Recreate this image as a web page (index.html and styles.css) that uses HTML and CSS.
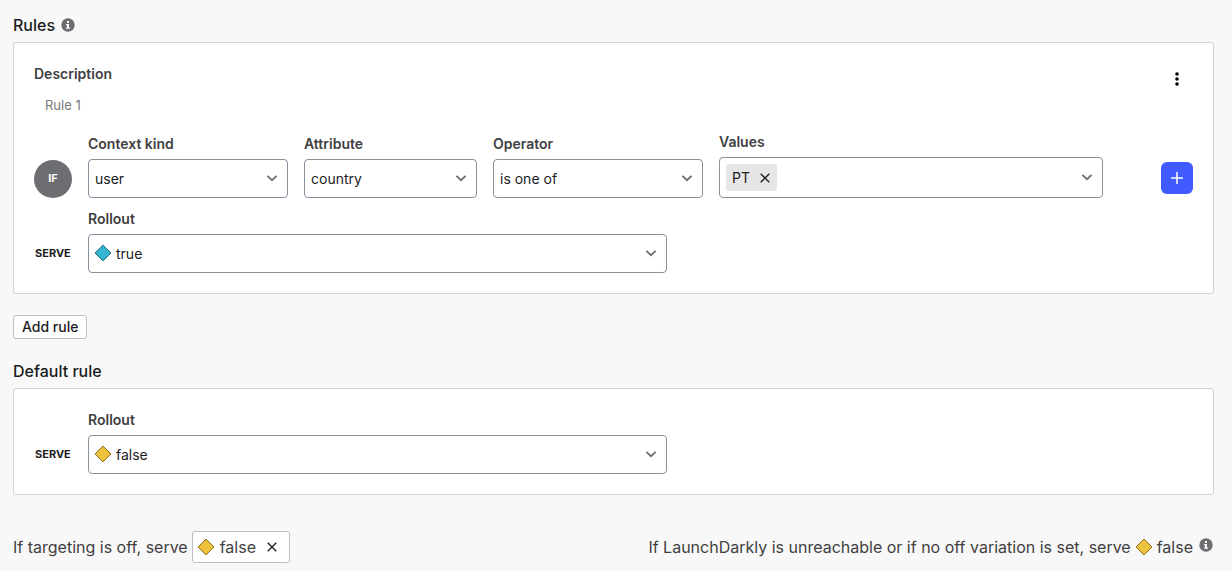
FILE: index.html
```html
<!DOCTYPE html>
<html lang="en">
<head>
<meta charset="utf-8">
<title>Targeting rules</title>
<link rel="stylesheet" href="styles.css">
</head>
<body>
<svg class="defs" width="0" height="0" aria-hidden="true">
  <symbol id="chevron" viewBox="0 0 12 12"><path d="M1.400 3.800 6 8.200l4.600-4.400" fill="none" stroke="currentColor" stroke-width="1.800"/></symbol>
  <symbol id="close" viewBox="0 0 12 12"><path d="m1.700 1.700 8.600 8.600m0-8.600-8.600 8.600" fill="none" stroke="currentColor" stroke-width="1.300"/></symbol>
  <symbol id="diamond" viewBox="0 0 18 18"><path d="M9 1.100 16.900 9 9 16.900 1.100 9z" stroke-width="1"/></symbol>
  <symbol id="info" viewBox="0 0 14 14"><circle cx="7" cy="7" r="6.700" fill="currentColor"/><path d="M6 3h2v1.900H6zM5 6h3v3.400h1v1.300H5V9.400h1V7.300H5z" fill="#f8f8f8"/></symbol>
</svg>
<main class="page">
  <header class="heading">
    <h2 class="title">Rules</h2>
    <svg class="info"><use href="#info"/></svg>
  </header>
  <section class="card">
    <div class="card-top">
      <div class="description">
        <label class="label" for="description">Description</label>
        <input class="description-input" id="description" type="text" value="Rule 1">
      </div>
      <button class="menu" type="button" aria-label="Rule options">
        <svg width="4" height="16" viewBox="0 0 4 16"><circle cx="2" cy="3" r="1.800"/><circle cx="2" cy="8" r="1.800"/><circle cx="2" cy="13" r="1.800"/></svg>
      </button>
    </div>
    <div class="clause">
      <div class="lead"><span class="badge">IF</span></div>
      <div class="fields">
        <div class="field">
          <label class="label" for="kind">Context kind</label>
          <div class="control"><select class="select" id="kind"><option>user</option></select><svg class="chevron"><use href="#chevron"/></svg></div>
        </div>
        <div class="field">
          <label class="label" for="attribute">Attribute</label>
          <div class="control"><select class="select" id="attribute"><option>country</option></select><svg class="chevron"><use href="#chevron"/></svg></div>
        </div>
        <div class="field">
          <label class="label" for="operator">Operator</label>
          <div class="control"><select class="select" id="operator"><option>is one of</option></select><svg class="chevron"><use href="#chevron"/></svg></div>
        </div>
        <div class="field">
          <label class="label" for="values">Values</label>
          <div class="control values">
            <span class="tag">PT<button class="remove" type="button" aria-label="Remove PT"><svg class="close"><use href="#close"/></svg></button></span>
            <input class="values-input" id="values" type="text">
            <svg class="chevron"><use href="#chevron"/></svg>
          </div>
        </div>
      </div>
      <div class="action">
        <button class="add" type="button" aria-label="Add clause"><svg width="12" height="12" viewBox="0 0 12 12"><path d="M6 0v12M0 6h12" stroke="currentColor" stroke-width="1.500"/></svg></button>
      </div>
    </div>
    <div class="clause">
      <div class="lead serve">SERVE</div>
      <div class="field rollout">
        <label class="label" for="rollout">Rollout</label>
        <div class="control"><svg class="diamond blue over"><use href="#diamond"/></svg><select class="select variation" id="rollout"><option>true</option></select><svg class="chevron"><use href="#chevron"/></svg></div>
      </div>
    </div>
  </section>
  <button class="add-rule" type="button">Add rule</button>
  <header class="heading">
    <h2 class="title">Default rule</h2>
  </header>
  <section class="card">
    <div class="clause">
      <div class="lead serve">SERVE</div>
      <div class="field rollout">
        <label class="label" for="default-rollout">Rollout</label>
        <div class="control"><svg class="diamond yellow over"><use href="#diamond"/></svg><select class="select variation" id="default-rollout"><option>false</option></select><svg class="chevron"><use href="#chevron"/></svg></div>
      </div>
    </div>
  </section>
  <footer class="footer">
    <div class="fallback">
      <span>If targeting is off, serve</span>
      <span class="chip"><svg class="diamond yellow"><use href="#diamond"/></svg>false<button class="remove" type="button" aria-label="Clear off variation"><svg class="close"><use href="#close"/></svg></button></span>
    </div>
    <div class="fallback">
      <span>If LaunchDarkly is unreachable or if no off variation is set, serve</span>
      <span class="variation-name"><svg class="diamond yellow"><use href="#diamond"/></svg>false</span>
      <svg class="info raised"><use href="#info"/></svg>
    </div>
  </footer>
</main>
</body>
</html>
```
FILE: styles.css
```css
* {
  box-sizing: border-box;
}

body {
  margin: 0;
  background: #f8f8f8;
  color: #1c1c1e;
  font: 14px/22px Inter, "Liberation Sans", sans-serif;
}

button,
input,
select {
  margin: 0;
  padding: 0;
  border: 0;
  background: none;
  color: inherit;
  font: inherit;
}

svg {
  display: block;
  flex: none;
}

.defs {
  position: absolute;
}

.page {
  display: flex;
  flex-direction: column;
  padding: 13px 18px 8px 13px;
}

.heading {
  display: flex;
  align-items: center;
  gap: 6px;
  margin-bottom: 5px;
}

.title {
  margin: 0;
  font-size: 16px;
  line-height: 24px;
  font-weight: 500;
}

.info {
  width: 14px;
  height: 14px;
  color: #6d6e71;
}

.card {
  display: flex;
  flex-direction: column;
  gap: 10px;
  padding: 20px;
  border: 1px solid #d1d3d4;
  border-radius: 3px;
  background: #fff;
}

.card-top {
  display: flex;
  justify-content: space-between;
  align-items: flex-start;
}

.description {
  display: flex;
  flex-direction: column;
  gap: 4px;
}

.label {
  color: #414042;
  font-weight: 600;
}

.description-input {
  width: 300px;
  height: 32px;
  padding: 0 11px;
  color: #77787b;
  font-size: 13px;
}

.menu,
.add {
  display: grid;
  place-items: center;
  width: 32px;
  height: 32px;
}

.clause {
  display: flex;
  align-items: flex-end;
}

.lead {
  flex: none;
  display: flex;
  align-items: center;
  width: 54px;
  font-size: 11px;
  font-weight: 700;
}

.serve {
  height: 40px;
  padding-left: 1px;
}

.badge {
  display: grid;
  place-items: center;
  width: 38px;
  height: 38px;
  padding-bottom: 2px;
  border-radius: 50%;
  background: #6d6e71;
  color: #fff;
}

.fields {
  flex: 1;
  display: grid;
  grid-template-columns: 200fr 173fr 210fr 384fr;
  align-items: end;
  gap: 16px;
}

.field {
  display: flex;
  flex-direction: column;
  gap: 4px;
  min-width: 0;
}

.rollout {
  flex: 0 1 579px;
}

.control {
  position: relative;
}

.select {
  display: block;
  appearance: none;
  width: 100%;
  height: 39px;
  padding: 0 28px 0 6px;
  border: 1px solid #8a929e;
  border-radius: 4px;
  background: #fff;
}

.variation {
  padding-left: 27px;
}

.chevron {
  position: absolute;
  top: 50%;
  right: 10px;
  width: 12px;
  height: 12px;
  margin-top: -7px;
  color: #6d6e71;
  pointer-events: none;
}

.values {
  display: flex;
  align-items: center;
  height: 41px;
  padding: 0 28px 0 6px;
  border: 1px solid #8a929e;
  border-radius: 4px;
}

.values .chevron {
  right: 9px;
}

.values-input {
  flex: 1;
  min-width: 0;
}

.tag {
  display: flex;
  align-items: center;
  gap: 9px;
  height: 27px;
  padding: 0 6px;
  border-radius: 3px;
  background: #e6e6e6;
}

.close {
  width: 12px;
  height: 12px;
  color: #1c1c1e;
}

.action {
  display: flex;
  align-items: center;
  height: 40px;
  margin-left: 58px;
}

.add {
  border-radius: 6px;
  background: #405bff;
  color: #fff;
}

.diamond {
  width: 18px;
  height: 18px;
}

.blue {
  fill: #34b4d0;
  stroke: #1b6b7d;
}

.yellow {
  fill: #edc23c;
  stroke: #8a6c14;
}

.over {
  position: absolute;
  top: 10px;
  left: 6px;
  pointer-events: none;
}

.add-rule {
  align-self: flex-start;
  height: 24px;
  margin: 21px 0 20px;
  padding: 0 8px;
  border: 1px solid #bcbec0;
  border-radius: 3px;
  background: #fff;
  font-weight: 500;
}

.footer {
  display: flex;
  flex-wrap: wrap;
  justify-content: space-between;
  margin-top: 36px;
  padding-right: 1px;
  color: #414042;
  font-size: 16px;
}

.fallback {
  display: flex;
  align-items: center;
  gap: 4px;
}

.chip {
  display: flex;
  align-items: center;
  gap: 5px;
  height: 32px;
  padding: 0 11px 0 4px;
  border: 1px solid #bcbec0;
  border-radius: 3px;
  background: #fff;
}

.chip .remove {
  margin-left: 5px;
}

.variation-name {
  display: flex;
  align-items: center;
  gap: 4px;
}

.raised {
  margin: 0 0 4px 2px;
}
```
